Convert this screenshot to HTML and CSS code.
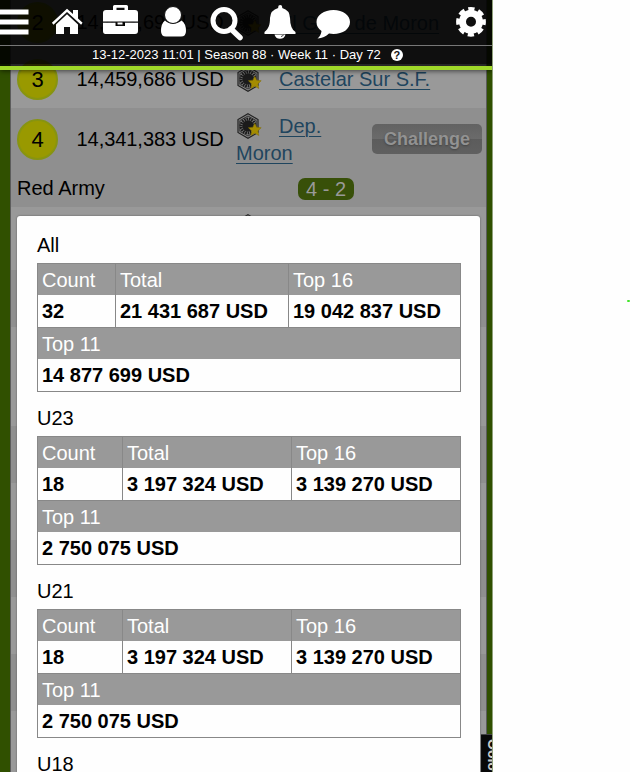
FILE: index.html
```html
<!DOCTYPE html>
<html lang="en">
<head>
<meta charset="utf-8">
<title>Team values</title>
<link rel="stylesheet" href="styles.css">
</head>
<body>
<svg width="0" height="0" class="defs">
  <symbol id="crest" viewBox="0 0 26 26">
    <path d="M12 .8 22 6.500v13L12 25.200 2 19.500v-13z" fill="#888" stroke="#222" stroke-width="1.2"/>
    <path d="M12 3 20.200 7.600v10.800L12 23l-8.200-4.600V7.600z" fill="none" stroke="#333"/>
    <circle cx="12" cy="13" r="7" fill="none" stroke="#1b1b1b" stroke-width="3" stroke-dasharray="1.700 .7"/>
    <circle cx="12" cy="13" r="5.800" fill="#1b1b1b"/>
    <path d="m18.800 10.200 1.900 4 4.500.5-3.300 3.200.9 4.600-4-2.300-4 2.300.9-4.600-3.300-3.200 4.500-.5z" fill="#a48c00" stroke="#806c00" stroke-width=".5"/>
  </symbol>
</svg>
<div class="screen">
  <main class="page">
    <section class="row first">
      <div class="line">
        <span class="rank">2</span><span class="value">14,483,692 USD</span>
        <span class="team"><svg class="crest"><use href="#crest"/></svg><a>El Gallo de Moron</a></span>
      </div>
    </section>
    <section class="row third">
      <div class="line">
        <span class="rank">3</span><span class="value">14,459,686 USD</span>
        <span class="team"><svg class="crest"><use href="#crest"/></svg><a>Castelar Sur S.F.</a></span>
      </div>
    </section>
    <section class="row dark fourth">
      <div class="line">
        <span class="rank">4</span><span class="value">14,341,383 USD</span>
        <span class="team narrow"><svg class="crest"><use href="#crest"/></svg><a>Dep.</a><br><a>Moron</a></span>
        <button class="challenge">Challenge</button>
      </div>
      <div class="match"><span class="opponent">Red Army</span><span class="score">4 - 2</span></div>
    </section>
    <section class="row fifth"><svg class="crest"><use href="#crest"/></svg></section>
    <section class="row dark"></section>
    <section class="row tall"></section>
    <section class="row dark"></section>
    <section class="row"></section>
    <section class="row dark"></section>
    <section class="row"></section>
    <section class="row dark"></section>
    <section class="row tall"></section>
  </main>
  <aside class="tab"><span>Oolo</span></aside>

  <header class="top">
    <nav class="icons">
      <svg viewBox="0 0 493 45" width="493" height="45" fill="#fff">
        <path d="M0 9.500h28.500v5H0zM0 19.500h28.500v5H0zM0 29.500h28.500v5H0z"/>
        <path d="m67 8.800 6 5.300V10h5v8.500l4.600 4.200-1.500 2L67 12 53.500 24.700l-1.600-2z"/>
        <path d="m67 14.200 11 10.300V34h-8v-7h-6v7h-8v-9.500z"/>
        <path fill-rule="evenodd" d="M113 10V6.500q0-1.500 1.500-1.500h12q1.500 0 1.500 1.500V10h7q3 0 3 3v8.500h-35V13q0-3 3-3zm3.500 0h8V7.700h-8z"/>
        <path d="M103 22.800h12.500V26h9.500v-3.200h13V31q0 3-3 3h-29.500q-2.500 0-2.500-3z"/><path d="M117.500 22.500h5v2h-5z"/>
        <path d="M165 20.500q2.500 3 8 3t8.500-3q4.500 3 4.500 10.500 0 5.500-5 5.500h-15q-5 0-5-5.500 0-7.500 4-10.500z"/>
        <circle cx="173" cy="15" r="8.500" stroke="#101010" stroke-width="1"/>
        <circle cx="224" cy="20.500" r="11" fill="none" stroke="#fff" stroke-width="5"/>
        <path d="m231 29 9 8.500" stroke="#fff" stroke-width="5.500" stroke-linecap="round"/>
        <path d="M278.200 7q0-2 2-2t2 2v1q7.500 2 7.800 10 .2 11 5.500 14v2H264.500v-2c4-3 5.500-7 5.500-14q.5-8 8.200-10z"/>
        <path d="M274.500 34.500h11q-1 4.200-5.500 4.200t-5.500-4.200z"/><path d="M281 36.500q2-.2 2.500-1.800" fill="none" stroke="#111" stroke-width=".8"/>
        <path d="M333.500 10c9.500 0 16.500 5 16.500 12s-7 12-16.500 12q-2.500 0-4.500-.4-4.500 4.500-11.500 4.900 3.500-3 4-7.500-5-3.500-5-9c0-7 7.500-12 17-12z"/>
        <circle cx="471" cy="21.800" r="8.500" fill="none" stroke="#fff" stroke-width="7"/>
        <circle cx="471" cy="21.800" r="12.500" fill="none" stroke="#fff" stroke-width="4.800" stroke-dasharray="6 3.817" stroke-dashoffset="3"/>
      </svg>
    </nav>
    <div class="date"><span>13-12-2023 11:01 | Season 88 · Week 11 · Day 72</span><span class="help">?</span></div>
  </header>

  <div class="modal">
    <h2>All</h2>
    <div class="stats wide">
      <div><b>Count</b><strong>32</strong></div>
      <div><b>Total</b><strong>21 431 687 USD</strong></div>
      <div><b>Top 16</b><strong>19 042 837 USD</strong></div>
      <div class="full"><b>Top 11</b><strong>14 877 699 USD</strong></div>
    </div>
    <h2>U23</h2>
    <div class="stats">
      <div><b>Count</b><strong>18</strong></div>
      <div><b>Total</b><strong>3 197 324 USD</strong></div>
      <div><b>Top 16</b><strong>3 139 270 USD</strong></div>
      <div class="full"><b>Top 11</b><strong>2 750 075 USD</strong></div>
    </div>
    <h2>U21</h2>
    <div class="stats">
      <div><b>Count</b><strong>18</strong></div>
      <div><b>Total</b><strong>3 197 324 USD</strong></div>
      <div><b>Top 16</b><strong>3 139 270 USD</strong></div>
      <div class="full"><b>Top 11</b><strong>2 750 075 USD</strong></div>
    </div>
    <h2>U18</h2>
  </div>
</div>
<i class="dot"></i>
</body>
</html>
```
FILE: styles.css
```css
* { box-sizing: border-box; }
body { margin: 0; background: #fefefe; font: 20px/27px "Liberation Sans", Arial, sans-serif; color: #000; height: 772px; overflow: hidden; }
.defs { position: absolute; }
.screen { position: relative; width: 493px; height: 772px; overflow: hidden; background: #305000; border-right: 1px solid #90a17b; }
.page { margin: 0 5px 0 10px; border: solid #5c5c5c; border-width: 0 1px; height: 772px; overflow: hidden; }
.row { height: 57px; background: #999; padding: 0 4px 0 6px; }
.dark { background: #8f8f8f; }
.tall { height: 99px; }
.first { height: 51px; padding-top: 2px; }
.third { height: 57px; padding-top: 8px; }
.fourth { height: 99px; padding-top: 4px; }
.fifth { height: 63px; padding: 7px 0 0 225px; }
.line { display: flex; align-items: center; height: 41px; }
.fourth .line { height: 54px; }
.rank { width: 41px; height: 41px; border-radius: 50%; border: 2px solid #879411; background: #999900; text-align: center; line-height: 37px; font-size: 22px; flex: none; }
.value { width: 178px; padding-left: 18.500px; flex: none; white-space: nowrap; letter-spacing: -.05px; }
.team { position: relative; top: 1px; white-space: nowrap; }
.third .team { top: 0; }
.narrow { width: 136px; flex: none; }
.crest { width: 26px; height: 26px; vertical-align: -6px; margin-right: 17px; }
a { color: #1f455e; text-decoration: underline; text-decoration-thickness: 1px; text-underline-offset: 3px; }
.challenge { width: 110px; height: 30px; flex: none; padding: 0; border: 0; border-radius: 5px; color: #929292; background: linear-gradient(#626262, #6b6b6b 50%, #5c5c5c 51%, #606060); font: bold 18px "Liberation Sans", Arial, sans-serif; text-shadow: 0 1px 2px #444; }
.match { display: flex; margin-top: 9px; align-items: center; }
.opponent { width: 281px; }
.score { width: 56px; height: 22px; line-height: 22px; border-radius: 7px; background: #385009; color: #999; text-align: center; }
.top { position: absolute; inset: 0 -1px auto 0; height: 70px; background: linear-gradient(rgba(0,0,0,.9) 64px, rgba(0,0,0,.75) 64px); border-bottom: 4px solid #9fd829; box-shadow: 0 1px 5px rgba(0,0,0,.6); }
.icons { height: 46px; border-bottom: 1px solid #777; }
.icons svg { display: block; }
.date { display: flex; height: 18px; padding-left: 92px; align-items: center; color: #fff; font-size: 13px; line-height: 18px; white-space: nowrap; }
.help { width: 12px; height: 12px; margin-left: 10px; border-radius: 50%; background: #fff; color: #111; font-size: 11px; font-weight: bold; line-height: 12px; text-align: center; }
.modal { position: absolute; left: 17px; top: 216px; width: 463px; height: 600px; padding: 15px 19px 0 20px; border-radius: 3px; background: #fefefe; box-shadow: 0 0 2px #555; }
h2 { margin: 0; font-size: 20px; font-weight: normal; height: 32px; line-height: 28px; }
.stats { display: grid; grid-template-columns: 85px 169px 169px; width: 424px; height: 129px; margin-bottom: 12px; border: solid #888; border-width: 1px 0 0 1px; }
.wide { grid-template-columns: 78px 173px 172px; }
.stats div { height: 64px; border: solid #888; border-width: 0 1px 1px 0; white-space: nowrap; }
.full { grid-column: 1 / -1; }
.stats b, .stats strong { display: block; padding-left: 4px; line-height: 32px; height: 32px; }
.stats b { height: 31px; font-weight: normal; background: #999; color: #fff; }
.tab { position: absolute; left: 481px; top: 734px; width: 12px; height: 40px; background: #080808; overflow: hidden; border-top: 1px solid #444; }
.tab span { position: absolute; left: 5px; top: 4px; writing-mode: vertical-rl; color: #ccc; font-size: 14px; line-height: 14px; font-weight: bold; }
.dot { position: absolute; left: 627px; top: 300px; width: 3px; height: 2px; border-radius: 1px; background: #43e52b; }
```
